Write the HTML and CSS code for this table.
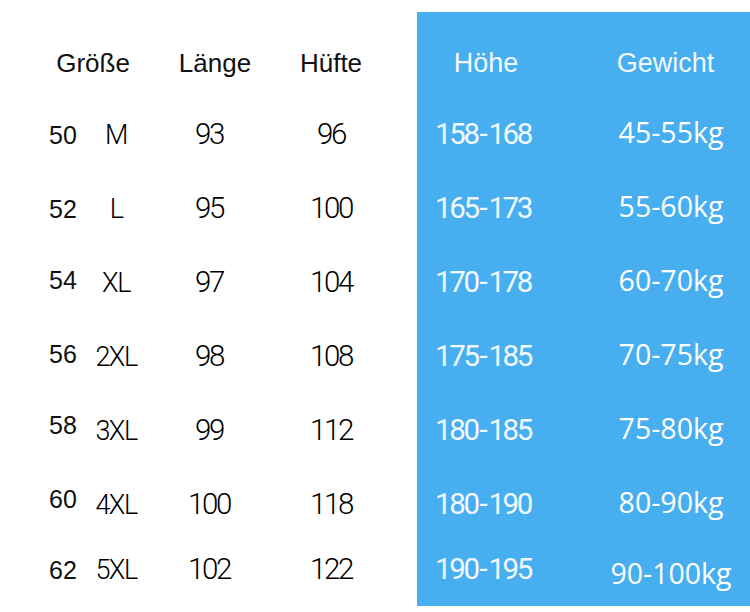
FILE: index.html
```html
<!DOCTYPE html>
<html lang="de">
<head>
<meta charset="utf-8">
<title>Größentabelle</title>
<link rel="stylesheet" href="styles.css">
</head>
<body>
<div class="page">
  <section class="left">
    <div class="head span2">Größe</div>
    <div class="head h-laenge">Länge</div>
    <div class="head">Hüfte</div>

    <div class="eu">50</div><div class="sz">M</div><div class="num">93</div><div class="num">96</div>
    <div class="eu">52</div><div class="sz">L</div><div class="num">95</div><div class="num">100</div>
    <div class="eu up1">54</div><div class="sz">XL</div><div class="num">97</div><div class="num">104</div>
    <div class="eu up1">56</div><div class="sz">2XL</div><div class="num">98</div><div class="num">108</div>
    <div class="eu up2">58</div><div class="sz">3XL</div><div class="num">99</div><div class="num">112</div>
    <div class="eu up2">60</div><div class="sz">4XL</div><div class="num">100</div><div class="num">118</div>
    <div class="eu">62</div><div class="sz">5XL</div><div class="num">102</div><div class="num">122</div>
  </section>
  <section class="panel">
    <div class="head light h-hoehe">Höhe</div>
    <div class="head light h-gewicht">Gewicht</div>

    <div class="num light">158<span class="dash">-</span>168</div><div class="kg">45-55kg</div>
    <div class="num light">165<span class="dash">-</span>173</div><div class="kg">55-60kg</div>
    <div class="num light">170<span class="dash">-</span>178</div><div class="kg">60-70kg</div>
    <div class="num light">175<span class="dash">-</span>185</div><div class="kg">70-75kg</div>
    <div class="num light">180<span class="dash">-</span>185</div><div class="kg">75-80kg</div>
    <div class="num light">180<span class="dash">-</span>190</div><div class="kg">80-90kg</div>
    <div class="num light">190<span class="dash">-</span>195</div><div class="kg last">90-100kg</div>
  </section>
</div>
</body>
</html>
```
FILE: styles.css
```css
html, body {
  margin: 0;
  padding: 0;
  background: #ffffff;
}

.page {
  display: flex;
  width: 750px;
  height: 612px;
  overflow: hidden;
}

.left,
.panel {
  display: grid;
  grid-template-rows: 70px repeat(6, 74px) 56px;
  align-items: center;
  box-sizing: border-box;
}

.left {
  width: 417px;
  margin-top: 12px;
  padding: 16px 0 0 40px;
  grid-template-columns: 46px 60px 126px 118px;
}

.panel {
  width: 333px;
  height: 594px;
  margin-top: 12px;
  padding-top: 16px;
  background: #47aef0;
  grid-template-columns: 132px 158px;
  justify-content: space-between;
}

.head {
  font-family: "Liberation Sans", Arial, sans-serif;
  font-size: 26px;
  color: #111;
  text-align: center;
  line-height: 1;
}

.span2 {
  grid-column: span 2;
}

.h-laenge {
  padding-left: 12px;
}

.h-hoehe {
  padding-left: 6px;
  font-size: 27px;
}

.h-gewicht {
  padding-right: 11px;
  font-size: 27px;
}

.eu {
  font-family: "Liberation Sans", Arial, sans-serif;
  font-size: 25px;
  color: #111;
  text-align: center;
  line-height: 1;
}

.up1 {
  margin-bottom: 6px;
}

.up2 {
  margin-bottom: 12px;
}

.sz,
.num {
  font-family: Roboto, "DejaVu Sans Condensed", sans-serif;
  font-weight: 300;
  font-size: 29.5px;
  letter-spacing: -2.4px;
  color: #000;
  text-align: center;
  line-height: 1;
}

.sz {
  font-size: 27px;
  letter-spacing: -1.5px;
}

.dash {
  display: inline-block;
  margin: 0 3px 0 2px;
}

.light {
  color: #f2faff;
  font-weight: 400;
}

.kg {
  font-family: "Open Sans", "Liberation Sans", sans-serif;
  font-size: 28.5px;
  color: #ffffff;
  text-align: center;
  line-height: 1;
  margin-bottom: 6px;
}

.kg.last {
  margin-bottom: 0;
  margin-top: 6px;
}
```
